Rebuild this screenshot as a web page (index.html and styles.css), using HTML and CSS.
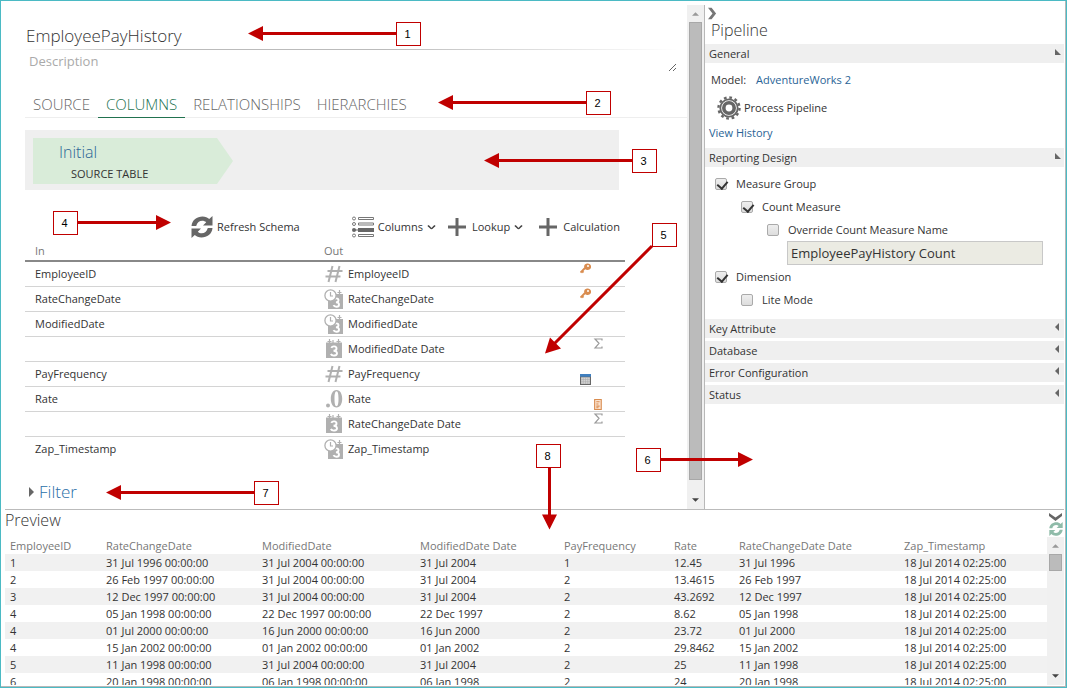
FILE: index.html
```html
<!DOCTYPE html>
<html lang="en">
<head>
<meta charset="utf-8">
<title>EmployeePayHistory</title>
<link rel="stylesheet" href="styles.css">
</head>
<body>
<svg class="defs" width="0" height="0" aria-hidden="true">
  <symbol id="refresh" viewBox="0 0 22 22">
    <path d="M.5 10C1 4 6 .5 11.500.5c3 0 5 1 6.700 2.500L21.500 0v9.500h-9.500l3.200-3.200C14 5.300 12.800 4.800 11.300 4.800 8.500 4.800 6 6.500 5.200 10z"/>
    <path d="M21.500 12c-.5 6-5.500 9.500-11 9.500-3 0-5-1-6.700-2.500L.5 22v-9.500H10l-3.200 3.200c1.200 1 2.400 1.500 3.900 1.500 2.800 0 5.300-1.700 6.100-5.200z"/>
  </symbol>
  <symbol id="plus" viewBox="0 0 18 18"><path d="M7.500 0h3v7.500H18v3h-7.500V18h-3v-7.500H0v-3h7.500z"/></symbol>
  <symbol id="caret" viewBox="0 0 9 5"><path d="M.8.800C2.500 1 3.500 3.500 4.500 3.500S6.500 1 8.200.800" fill="none" stroke="#444" stroke-width="1.400"/></symbol>
  <symbol id="chevron" viewBox="0 0 10 13"><path d="M0 0h4l5 6.500L4 13H0l5-6.500z"/></symbol>
  <symbol id="hash" viewBox="0 0 20 20"><path d="M8.500 2 4.500 18M15.500 2l-4 16M3.500 7h15M1.500 12.500h15" fill="none" stroke="#b0b0b0" stroke-width="2"/></symbol>
  <symbol id="calendar" viewBox="0 0 20 20">
    <path d="M2 3.500h16V19H2z"/><path d="M5.500 0v5M9 1v3M14.500 0v5M3.500 2.500h4M12.500 2.500h4" fill="none" stroke="#b0b0b0" stroke-width="1.200"/>
    <path d="M7.300 8.800c1-2 5.200-2 5.200.7 0 1.700-1.500 2.300-3 2.300 1.800 0 3.500.6 3.500 2.500 0 2.800-5 3-6.200.7" fill="none" stroke="#fff" stroke-width="1.900"/>
  </symbol>
  <symbol id="datetime" viewBox="0 0 20 20">
    <path d="M4 5h15v15H4z"/><path d="M15.500 1v5M13.500 3.500h4" fill="none" stroke="#b0b0b0" stroke-width="1.200"/>
    <path d="M9.500 10.800c1-2 5-2 5 .5 0 1.600-1.300 2.100-2.600 2.100 1.600 0 3.100.6 3.100 2.300 0 2.600-4.400 2.700-5.500.5" fill="none" stroke="#fff" stroke-width="1.900"/>
    <circle cx="6.500" cy="6.500" r="5.600" fill="#fff" stroke="#b0b0b0" stroke-width="1.300"/><path d="M6.500 3v4H9" fill="none" stroke="#b0b0b0" stroke-width="1.200"/>
  </symbol>
  <symbol id="decimal" viewBox="0 0 20 20">
    <circle cx="4" cy="16.500" r="2"/><path fill-rule="evenodd" d="M12.500 1c3.800 0 5.700 4 5.700 8.800s-1.900 8.700-5.700 8.700-5.700-4-5.700-8.700S8.700 1 12.500 1zm0 1.200c-1.500 0-2 3.300-2 7.600s.5 7.500 2 7.500 2-3.200 2-7.500-.5-7.600-2-7.600z"/>
  </symbol>
  <symbol id="key" viewBox="0 0 11 11">
    <path d="M.5 9.500 5 5M2 8l1.500 1.500" fill="none" stroke="#d98c4f" stroke-width="1.900"/>
    <path fill="#d98c4f" fill-rule="evenodd" d="M7 .5a3.500 3.300 0 1 1 0 6.500 3.500 3.300 0 0 1 0-6.500zm1 1.500a1 1 0 1 0 0 2 1 1 0 0 0 0-2z"/>
  </symbol>
  <symbol id="sigma" viewBox="0 0 10 11"><path d="M8.500 2.500V1H1.500L5.500 5.300 1.500 10h7V8.500" fill="none" stroke="#999" stroke-width="1.200"/></symbol>
  <symbol id="grid" viewBox="0 0 10 10"><path fill="#666" d="M0 0h10v10H0z"/><path fill="#3f7fbf" d="M0 0h10v2.500H0z"/><path fill="#d4d4d4" d="M1 3h8v6H1z"/><path d="M3 3v6M5 3v6M7 3v6M1 5h8M1 7h8" stroke="#aaa" stroke-width=".5"/></symbol>
  <symbol id="ruler" viewBox="0 0 8 10"><path fill="#fbe3d0" stroke="#d98c4f" d="M.5.500h6v9h-6z"/><path d="M2 2.500h3M2 4.500h2M2 6.500h3M2 8h2" stroke="#d98c4f"/></symbol>
  <symbol id="up" viewBox="0 0 8 4"><path d="M0 4l4-4 4 4z"/></symbol>
  <symbol id="down" viewBox="0 0 8 4"><path d="M0 0h8L4 4z"/></symbol>
  <symbol id="open" viewBox="0 0 6 8"><path d="M0 1l6 6H0z"/></symbol>
  <symbol id="closed" viewBox="0 0 6 8"><path d="M4 0v8L0 4z"/></symbol>
</svg>

<div class="frame">
  <div class="workspace">
    <main class="editor">
      <form class="heading">
        <input class="name" aria-label="Name" value="EmployeePayHistory">
        <textarea class="description" aria-label="Description" placeholder="Description"></textarea>
      </form>
      <nav class="tabs">
        <button class="tab">SOURCE</button><button class="tab active">COLUMNS</button><button class="tab">RELATIONSHIPS</button><button class="tab">HIERARCHIES</button>
      </nav>
      <div class="content">
        <div class="steps"><div class="step"><a href="#initial">Initial</a><span>SOURCE TABLE</span></div></div>
        <div class="toolbar">
          <button class="tool refresh-tool"><svg class="tool-icon"><use href="#refresh"/></svg>Refresh Schema</button>
          <button class="tool columns-tool"><svg class="tool-icon" viewBox="0 0 22 22"><g fill="#fff" stroke="#777"><path d="M6.500 1.500h15v2h-15zM6.500 7h15v2h-15zM6.500 18.500h15v2h-15z"/><circle cx="2" cy="2.500" r="1.500"/><circle cx="2" cy="8" r="1.500"/><circle cx="2" cy="19.500" r="1.500"/></g><path d="M6 12h16v4H6z"/><circle cx="2" cy="14" r="2"/><path d="M2 14h4" stroke="#666"/></svg>Columns<svg class="caret"><use href="#caret"/></svg></button>
          <button class="tool lookup-tool"><svg class="plus"><use href="#plus"/></svg>Lookup<svg class="caret"><use href="#caret"/></svg></button>
          <button class="tool"><svg class="plus"><use href="#plus"/></svg>Calculation</button>
        </div>
        <table class="columns">
          <colgroup><col class="in-col"><col class="out-col"><col class="flag-col"></colgroup>
          <thead><tr><th>In</th><th>Out</th><th></th></tr></thead>
          <tbody>
            <tr><td>EmployeeID</td><td><span class="field"><svg class="type"><use href="#hash"/></svg>EmployeeID</span></td><td><span class="flags"><svg class="flag"><use href="#key"/></svg></span></td></tr>
            <tr><td>RateChangeDate</td><td><span class="field"><svg class="type"><use href="#datetime"/></svg>RateChangeDate</span></td><td><span class="flags"><svg class="flag"><use href="#key"/></svg></span></td></tr>
            <tr><td>ModifiedDate</td><td><span class="field"><svg class="type"><use href="#datetime"/></svg>ModifiedDate</span></td><td></td></tr>
            <tr><td></td><td><span class="field"><svg class="type"><use href="#calendar"/></svg>ModifiedDate Date</span></td><td><span class="flags second"><svg class="flag"><use href="#sigma"/></svg></span></td></tr>
            <tr><td>PayFrequency</td><td><span class="field"><svg class="type"><use href="#hash"/></svg>PayFrequency</span></td><td><span class="flags low"><svg class="flag"><use href="#grid"/></svg></span></td></tr>
            <tr><td>Rate</td><td><span class="field"><svg class="type"><use href="#decimal"/></svg>Rate</span></td><td><span class="flags second low"><svg class="flag"><use href="#ruler"/></svg></span></td></tr>
            <tr><td></td><td><span class="field"><svg class="type"><use href="#calendar"/></svg>RateChangeDate Date</span></td><td><span class="flags second"><svg class="flag"><use href="#sigma"/></svg></span></td></tr>
            <tr><td>Zap_Timestamp</td><td><span class="field"><svg class="type"><use href="#datetime"/></svg>Zap_Timestamp</span></td><td></td></tr>
          </tbody>
        </table>
        <button class="filter"><svg viewBox="0 0 5 10"><path d="M0 0l5 5-5 5z"/></svg>Filter</button>
      </div>
    </main>
    <div class="scrollbar"><svg class="up"><use href="#up"/></svg><div class="thumb"></div><svg class="down"><use href="#down"/></svg></div>
    <aside class="pipeline">
      <button class="collapse" aria-label="Collapse panel"><svg><use href="#chevron"/></svg></button>
      <h2>Pipeline</h2>
      <button class="section">General<svg><use href="#open"/></svg></button>
      <div class="general">
        <p><span>Model:</span><a href="#model">AdventureWorks 2</a></p>
        <button class="process"><svg viewBox="-12 -12 24 24"><g fill="none" stroke="#666"><circle r="5.200" stroke-width="3.600"/><circle r="8.700" stroke-width="1.800"/><circle r="10.500" stroke-width="2.400" stroke-dasharray="2.700 2.800"/></g></svg>Process Pipeline</button>
        <a class="history" href="#history">View History</a>
      </div>
      <button class="section">Reporting Design<svg><use href="#open"/></svg></button>
      <div class="reporting">
        <label><input type="checkbox" checked>Measure Group</label>
        <label class="level-1"><input type="checkbox" checked>Count Measure</label>
        <label class="level-2"><input type="checkbox">Override Count Measure Name</label>
        <input class="measure-name" aria-label="Count measure name" value="EmployeePayHistory Count">
        <label><input type="checkbox" checked>Dimension</label>
        <label class="level-1"><input type="checkbox">Lite Mode</label>
      </div>
      <button class="section">Key Attribute<svg><use href="#closed"/></svg></button>
      <button class="section">Database<svg><use href="#closed"/></svg></button>
      <button class="section">Error Configuration<svg><use href="#closed"/></svg></button>
      <button class="section">Status<svg><use href="#closed"/></svg></button>
    </aside>
  </div>
  <section class="preview">
    <div class="preview-data">
      <h2>Preview</h2>
      <table>
        <colgroup><col class="c1"><col class="c2"><col class="c3"><col class="c4"><col class="c5"><col class="c6"><col class="c7"><col class="c8"></colgroup>
        <thead><tr><th>EmployeeID</th><th>RateChangeDate</th><th>ModifiedDate</th><th>ModifiedDate Date</th><th>PayFrequency</th><th>Rate</th><th>RateChangeDate Date</th><th>Zap_Timestamp</th></tr></thead>
        <tbody>
          <tr><td>1</td><td>31 Jul 1996 00:00:00</td><td>31 Jul 2004 00:00:00</td><td>31 Jul 2004</td><td>1</td><td>12.45</td><td>31 Jul 1996</td><td>18 Jul 2014 02:25:00</td></tr>
          <tr><td>2</td><td>26 Feb 1997 00:00:00</td><td>31 Jul 2004 00:00:00</td><td>31 Jul 2004</td><td>2</td><td>13.4615</td><td>26 Feb 1997</td><td>18 Jul 2014 02:25:00</td></tr>
          <tr><td>3</td><td>12 Dec 1997 00:00:00</td><td>31 Jul 2004 00:00:00</td><td>31 Jul 2004</td><td>2</td><td>43.2692</td><td>12 Dec 1997</td><td>18 Jul 2014 02:25:00</td></tr>
          <tr><td>4</td><td>05 Jan 1998 00:00:00</td><td>22 Dec 1997 00:00:00</td><td>22 Dec 1997</td><td>2</td><td>8.62</td><td>05 Jan 1998</td><td>18 Jul 2014 02:25:00</td></tr>
          <tr><td>4</td><td>01 Jul 2000 00:00:00</td><td>16 Jun 2000 00:00:00</td><td>16 Jun 2000</td><td>2</td><td>23.72</td><td>01 Jul 2000</td><td>18 Jul 2014 02:25:00</td></tr>
          <tr><td>4</td><td>15 Jan 2002 00:00:00</td><td>01 Jan 2002 00:00:00</td><td>01 Jan 2002</td><td>2</td><td>29.8462</td><td>15 Jan 2002</td><td>18 Jul 2014 02:25:00</td></tr>
          <tr><td>5</td><td>11 Jan 1998 00:00:00</td><td>31 Jul 2004 00:00:00</td><td>31 Jul 2004</td><td>2</td><td>25</td><td>11 Jan 1998</td><td>18 Jul 2014 02:25:00</td></tr>
          <tr><td>6</td><td>20 Jan 1998 00:00:00</td><td>06 Jan 1998 00:00:00</td><td>06 Jan 1998</td><td>2</td><td>24</td><td>20 Jan 1998</td><td>18 Jul 2014 02:25:00</td></tr>
        </tbody>
      </table>
    </div>
    <div class="preview-side">
      <button aria-label="Collapse preview"><svg class="fold" viewBox="0 0 13 8"><path d="M0 0v3l6.500 5L13 3V0L6.500 4.500z"/></svg></button>
      <button aria-label="Refresh preview"><svg class="reload"><use href="#refresh"/></svg></button>
      <div class="scrollbar"><svg class="up"><use href="#up"/></svg><div class="thumb"></div><svg class="down"><use href="#down"/></svg></div>
    </div>
  </section>
  <div class="callouts">
    <svg class="arrows"><g stroke="#c00000" stroke-width="3"><path d="M396 33.500H260M586 102.500H450M632 160.500H496M77 222.500h82M652 246 553 345M660 459.500h82M254 492.500H118M549.500 467v50"/></g><path fill="#c00000" d="M248 33.500l15-7.500v15zM438 102.500l15-7.500v15zM484 160.500l15-7.500v15zM171 222.500l-15-7.500v15zM545 353.500l5-16 11 11zM753 459.500l-15-7.500v15zM106 492.500l15-7.500v15zM549.500 529.500l-7.500-15h15z"/></svg>
    <span class="mark m1">1</span><span class="mark m2">2</span><span class="mark m3">3</span><span class="mark m4">4</span><span class="mark m5">5</span><span class="mark m6">6</span><span class="mark m7">7</span><span class="mark m8">8</span>
  </div>
</div>
</body>
</html>
```
FILE: styles.css
```css
* { box-sizing: border-box; }
body { margin: 0; font: 11px/16px "Open Sans", sans-serif; color: #333; background: #fff; }
button, input, textarea { font: inherit; color: inherit; margin: 0; }
button { border: 0; padding: 0; background: none; text-align: left; }
svg { display: block; flex: none; fill: #666; }
a { color: #2a6496; text-decoration: none; }
h2 { margin: 0; font-size: 16px; line-height: 20px; font-weight: 300; }
table { border-collapse: collapse; table-layout: fixed; width: 100%; }
th { font-weight: 400; text-align: left; color: #777; }
.defs { position: absolute; }

.frame { position: relative; display: flex; flex-direction: column; height: 100vh; overflow: hidden; border: 1px solid #4bbac4; padding: 4px 0 0 4px; }
.frame::after { content: ""; position: absolute; inset: 0; border: solid #b8b8b8; border-width: 0 1px 1px 0; pointer-events: none; }
.workspace { display: flex; flex: none; margin-right: 2px; border-bottom: 1px solid #bbb; }
.editor { flex: 1; min-width: 0; }

.heading { padding: 20px 10px 0 20px; }
.name { display: block; width: 100%; height: 25px; border: 0; border-bottom: 1px solid; border-image: linear-gradient(90deg, #fff, #bbb 15%, #bbb 55%, #fff) 1; padding: 0 1px 4px; font-size: 17px; line-height: 20px; font-weight: 300; outline: 0; background: none; }
.description { display: block; width: 100%; height: 22px; border: 0; padding: 3px 4px; font-size: 13px; line-height: 17px; background: none; resize: both; overflow: hidden; }
.description::placeholder { color: #aaa; }

.tabs { display: flex; margin: 20px 0 0 20px; border-bottom: 1px solid #eee; }
.tab { height: 26px; margin-bottom: -1px; padding: 0 8px 2px; border-bottom: 1px solid transparent; font-size: 15px; font-weight: 300; color: #666; }
.tab.active { color: #21724f; border-bottom-color: #21724f; }

.content { padding: 12px 62px 5px 20px; }
.steps { margin-right: 6px; padding: 8px 8px 6px; background: #efefef; }
.step { display: flex; flex-direction: column; width: 200px; height: 46px; padding: 4px 0 0 26px; background: #d9ecd9; clip-path: polygon(0 0, 92% 0, 100% 50%, 92% 100%, 0 100%); }
.step a { font-size: 16px; line-height: 20px; font-weight: 300; }
.step span { padding-left: 12px; line-height: 24px; }

.toolbar { display: flex; justify-content: flex-end; align-items: center; margin: 24px 5px 0 0; height: 26px; }
.tool { display: flex; align-items: center; gap: 4px; }
.tool-icon { width: 22px; height: 22px; }
.plus { width: 18px; height: 18px; margin-right: 2px; }
.caret { width: 9px; height: 5px; }
.refresh-tool { margin-right: 52px; }
.columns-tool { margin-right: 12px; }
.lookup-tool { margin-right: 16px; }

.in-col { width: 291px; }
.out-col { width: 256px; }
.flag-col { width: 53px; }
.columns th { height: 21px; padding: 2px 8px 0; border-bottom: 2px solid #888; }
.columns th:first-child, .columns td:first-child { padding-left: 10px; }
.columns td { height: 25px; padding: 0 0 0 8px; border-bottom: 1px solid #d4d4d4; }
.columns tr:last-child td { border-bottom: 0; }
.field { display: flex; align-items: center; gap: 4px; }
.type { width: 20px; height: 20px; fill: #b0b0b0; }
.flags { display: flex; align-items: flex-start; height: 22px; }
.flags.second { padding-left: 13px; }
.flags.low { align-items: flex-end; }
.flag { width: 11px; height: 11px; }
.filter { display: flex; align-items: center; gap: 5px; margin: 19px 0 0 4px; font-size: 17px; line-height: 24px; font-weight: 300; color: #2a6fa8; }
.filter svg { width: 5px; height: 10px; }

.scrollbar { display: flex; flex-direction: column; align-items: center; width: 17px; background: #f0f0f0; }
.scrollbar svg { width: 7px; height: 4px; }
.up { margin: 7px 0 6px; fill: #999; }
.down { margin: auto 0 7px; fill: #444; }
.thumb { width: 13px; border: 1px solid #a8a8a8; background: #bbb; }
.workspace .scrollbar .thumb { flex: 1; margin-bottom: 18px; }

.pipeline { width: 360px; border-left: 1px solid #b8b8b8; }
.collapse { display: block; padding: 2px 3px 0; }
.collapse svg { width: 9px; height: 13px; fill: #777; }
.pipeline h2 { padding: 0 6px; margin-bottom: 4px; }
.section { display: flex; align-items: center; justify-content: space-between; width: 100%; height: 19px; margin-bottom: 3px; padding: 0 3px 0 4px; background: #efefef; }
.section svg { width: 6px; height: 8px; margin-bottom: 3px; }
.general { padding: 6px 4px 4px; }
.general p { display: flex; gap: 10px; margin: 0 0 8px; padding-left: 2px; }
.process { display: flex; align-items: center; gap: 3px; margin-left: 8px; }
.process svg { width: 24px; height: 24px; }
.history { display: block; margin: 5px 0 3px; }
.reporting { display: flex; flex-direction: column; align-items: flex-start; padding: 2px 10px 8px; }
.reporting label { display: flex; align-items: center; gap: 9px; height: 23px; }
.reporting .level-1 { margin-left: 26px; }
.reporting .level-2 { margin-left: 52px; }
.reporting input[type="checkbox"] { appearance: none; width: 12px; height: 12px; border: 1px solid #aaa; border-radius: 2px; background: linear-gradient(#eee, #ddd); }
.reporting input[type="checkbox"]:checked::after { content: ""; display: block; width: 5px; height: 8px; margin: 0 0 0 3px; border: solid #333; border-width: 0 2px 2px 0; transform: rotate(40deg); }
.measure-name { width: 256px; height: 24px; margin-left: 72px; padding: 0 3px; border: 1px solid #c8c8c8; background: #ebebe3; font-size: 13px; }

.preview { display: flex; flex: 1; min-height: 0; margin: 0 2px 2px 0; overflow: hidden; }
.preview-data { flex: 1; min-width: 0; }
.preview table { margin-top: 7px; }
.c1 { width: 96px; } .c2 { width: 156px; } .c3 { width: 158px; } .c4 { width: 144px; }
.c5 { width: 110px; } .c6 { width: 65px; } .c7 { width: 165px; } .c8 { width: 148px; }
.preview th, .preview td { height: 17px; padding: 0 5px; line-height: 17px; white-space: nowrap; }
.preview tbody tr:nth-child(odd) { background: #f1f1f1; }
.preview-side { display: flex; flex-direction: column; align-items: center; width: 17px; padding-top: 3px; }
.preview-side button { margin-bottom: 1px; }
.fold { width: 13px; height: 8px; }
.reload { width: 14px; height: 14px; fill: #8fbba9; }
.preview-side .scrollbar { flex: 1; }
.preview-side .thumb { height: 17px; }

.callouts { position: absolute; inset: -1px; pointer-events: none; }
.arrows { width: 100%; height: 100%; }
.mark { position: absolute; width: 25px; height: 24px; border: 1px solid #c00000; background: #fff; color: #000; font: 11px/22px "Liberation Sans", sans-serif; padding-right: 2px; text-align: center; }
.m1 { left: 396px; top: 22px; }
.m2 { left: 586px; top: 91px; }
.m3 { left: 632px; top: 149px; }
.m4 { left: 53px; top: 211px; }
.m5 { left: 652px; top: 223px; }
.m6 { left: 636px; top: 448px; }
.m7 { left: 254px; top: 481px; }
.m8 { left: 536px; top: 444px; }
```
